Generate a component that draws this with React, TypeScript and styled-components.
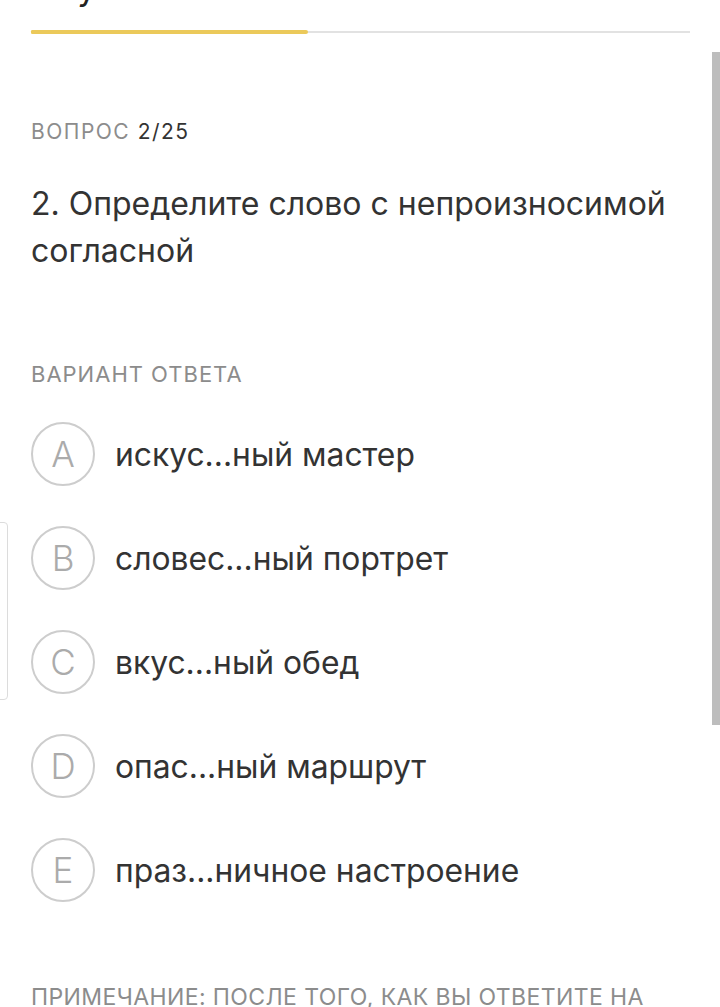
import React from 'react';
import styled, { createGlobalStyle } from 'styled-components';

const GlobalStyle = createGlobalStyle`
  html, body {
    margin: 0;
    padding: 0;
    background: #fff;
  }
  body {
    font-family: Inter, "Noto Sans", sans-serif;
    color: #333;
    overflow: hidden;
  }
`

const options = [
  { letter: 'A', text: 'искус...ный мастер' },
  { letter: 'B', text: 'словес...ный портрет' },
  { letter: 'C', text: 'вкус...ный обед' },
  { letter: 'D', text: 'опас...ный маршрут' },
  { letter: 'E', text: 'праз...ничное настроение' },
]

const App = () => {
  const current = 2
  const total = 25
  // прогресс по заданиям (ширина жёлтой полосы)
  const progress = 0.42

  return (
    <>
      <GlobalStyle />
      <Page>
        <Header>
          <Title>Обучение и тесты</Title>
          <Progress>
            <ProgressFill style={{ width: `${progress * 100}%` }} />
          </Progress>
        </Header>

        <Counter>
          ВОПРОС <b>{current}/{total}</b>
        </Counter>
        <Question>2. Определите слово с непроизносимой согласной</Question>

        <Label>ВАРИАНТ ОТВЕТА</Label>
        <OptionList>
          {options.map(o => (
            <Option key={o.letter}>
              <Letter>{o.letter}</Letter>
              <OptionText>{o.text}</OptionText>
            </Option>
          ))}
        </OptionList>

        <Note>ПРИМЕЧАНИЕ: ПОСЛЕ ТОГО, КАК ВЫ ОТВЕТИТЕ НА ВСЕ ВОПРОСЫ, НАЖМИТЕ КНОПКУ</Note>
      </Page>
      <SideTab />
      <Scrollbar />
    </>
  )
}

export default App

const Page = styled.div`
  width: 720px;
  height: 1007px;
  box-sizing: border-box;
  padding: 0 30px 0 31px;
  overflow: hidden;
`
const Header = styled.div`
  margin-top: -32px;
`
const Title = styled.div`
  font-size: 34px;
  line-height: 40px;
  color: #222;
`
const Progress = styled.div`
  margin-top: 23px;
  height: 2px;
  background: #e2e2e2;
  display: flex;
  align-items: center;
`
const ProgressFill = styled.div`
  height: 4px;
  border-radius: 2px 3px 3px 2px;
  background: #ebc95a;
`
const Counter = styled.div`
  margin-top: 87px;
  font-size: 21px;
  line-height: 24px;
  letter-spacing: 1.5px;
  color: #8c8c8c;

  b {
    font-weight: 400;
    color: #333;
  }
`
const Question = styled.div`
  margin-top: 36px;
  font-size: 32px;
  line-height: 47px;
  color: #333;
`
const Label = styled.div`
  margin-top: 88px;
  font-size: 22px;
  line-height: 24px;
  letter-spacing: 1px;
  color: #8c8c8c;
`
const OptionList = styled.div`
  margin-top: 36px;
  display: flex;
  flex-direction: column;
  gap: 40px;
`
const Option = styled.div`
  display: flex;
  align-items: center;
  gap: 20px;
`
const Letter = styled.div`
  width: 60px;
  height: 60px;
  flex: none;
  display: flex;
  align-items: center;
  justify-content: center;
  border: 2px solid #cdcdcd;
  border-radius: 50%;
  font-size: 35px;
  font-weight: 300;
  color: #ababab;
`
const OptionText = styled.div`
  font-size: 31.8px;
  color: #333;
`
const Note = styled.div`
  margin-top: 80px;
  font-size: 23px;
  line-height: 30px;
  letter-spacing: 0.4px;
  color: #8c8c8c;
`
const SideTab = styled.div`
  position: fixed;
  left: -6px;
  top: 522px;
  width: 12px;
  height: 176px;
  border: 1px solid #dcdcdc;
  border-radius: 4px;
  background: #fff;
`
const Scrollbar = styled.div`
  position: fixed;
  right: 0;
  top: 52px;
  width: 8px;
  height: 673px;
  background: #bdbdbd;
`
